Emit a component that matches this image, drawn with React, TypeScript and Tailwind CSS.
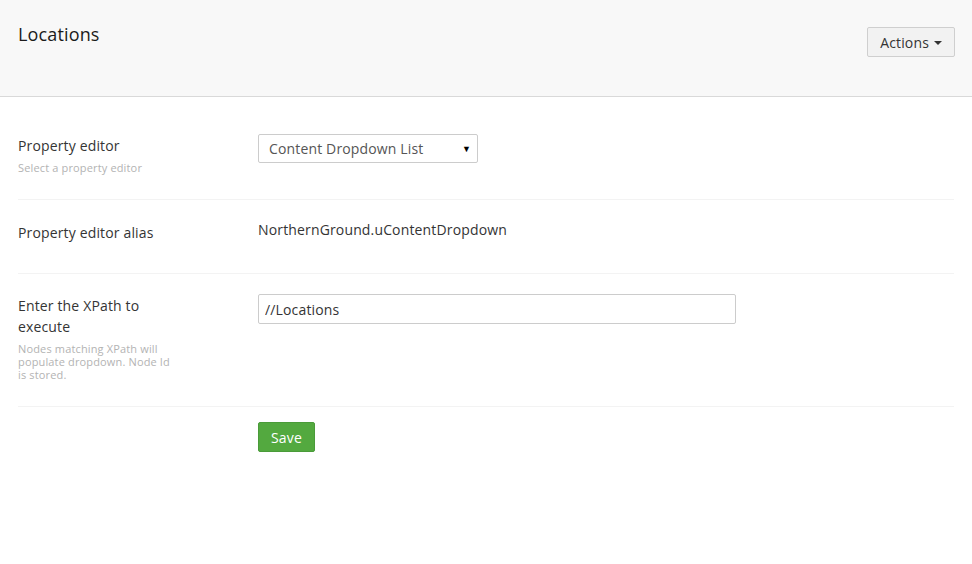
import React from "react";

const font = { fontFamily: '"Open Sans", "Liberation Sans", sans-serif' };

function Row({
  label,
  description,
  children,
}: {
  label: React.ReactNode;
  description?: React.ReactNode;
  children: React.ReactNode;
}) {
  return (
    <div className="flex border-b border-[#f3f3f3] pt-5 pb-[25px]">
      <div className="w-[240px] shrink-0">
        <div className="w-[155px] pt-[1px]">
          <div className="text-[14px] leading-[21px] text-[#343434]">{label}</div>
          <div className="mt-[5px] text-[11px] leading-[13px] text-[#b3b3b3]">{description}</div>
        </div>
      </div>
      <div className="flex-1">{children}</div>
    </div>
  );
}

export default function App() {
  return (
    <div className="min-h-[564px] bg-white tracking-[0.15px]" style={font}>
      <div className="flex h-[97px] items-start justify-between border-b border-[#d9d9d9] bg-[#f8f8f8] px-[18px]">
        <h1 className="mt-[22px] text-[18px] leading-[24px] text-[#1b1b1b]">Locations</h1>
        <button
          type="button"
          className="mt-[27px] mr-[-1px] flex h-[30px] items-center gap-[5px] rounded-[2px] border border-[#cfcfcf] bg-[#f2f2f2] px-[12px] text-[14px] text-[#343434]"
        >
          Actions
          <span className="mt-[1px] h-0 w-0 border-x-[4px] border-t-[4px] border-x-transparent border-t-[#343434]" />
        </button>
      </div>

      <div className="px-[18px] pt-[17px]">
        <Row label="Property editor" description="Select a property editor">
          <div className="flex h-[29px] w-[220px] items-center justify-between rounded-[2px] border border-[#cccccc] bg-white pl-[10px] pr-[6px] text-[14px] text-[#555555]">
            <span>Content Dropdown List</span>
            <span className="text-[9px] text-black">▼</span>
          </div>
        </Row>

        <Row label={<span className="block pt-[1px]">Property editor alias</span>}>
          <div className="text-[14px] leading-[20px] text-[#343434]">NorthernGround.uContentDropdown</div>
        </Row>

        <Row
          label="Enter the XPath to execute"
          description="Nodes matching XPath will populate dropdown. Node Id is stored."
        >
          <input
            readOnly
            value="//Locations"
            className="h-[30px] w-[478px] rounded-[2px] border border-[#cccccc] bg-white px-[6px] text-[14px] tracking-[0.15px] text-[#343434] outline-none"
            style={font}
          />
        </Row>

        <div className="pt-[15px] pl-[240px]">
          <button
            type="button"
            className="h-[30px] w-[57px] rounded-[2px] border border-[#4a9b39] bg-[#53a93f] text-[14px] text-white"
          >
            Save
          </button>
        </div>
      </div>
    </div>
  );
}
